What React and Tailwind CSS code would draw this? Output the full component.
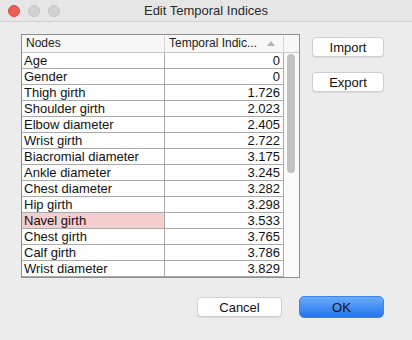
import React from 'react';

const ROWS = [
  ['Age', '0'],
  ['Gender', '0'],
  ['Thigh girth', '1.726'],
  ['Shoulder girth', '2.023'],
  ['Elbow diameter', '2.405'],
  ['Wrist girth', '2.722'],
  ['Biacromial diameter', '3.175'],
  ['Ankle diameter', '3.245'],
  ['Chest diameter', '3.282'],
  ['Hip girth', '3.298'],
  ['Navel girth', '3.533'],
  ['Chest girth', '3.765'],
  ['Calf girth', '3.786'],
  ['Wrist diameter', '3.829'],
];

function Button({ children, primary }) {
  return (
    <button
      className={
        primary
          ? 'w-[85px] h-[22px] rounded-[5px] border border-[#3d84ea] bg-gradient-to-b from-[#6aaaf8] to-[#2075ef] text-[13px] text-[#111] leading-none'
          : 'w-[85px] h-[20px] rounded-[4px] border border-[#cfcfcf] bg-white shadow-[0_1px_0_rgba(0,0,0,0.08)] text-[13px] text-[#111] leading-none'
      }
    >
      {children}
    </button>
  );
}

export default function App() {
  return (
    <div className="w-[412px] h-[340px] bg-[#ececec] font-['Liberation_Sans',Arial,sans-serif] text-[#111] overflow-hidden flex flex-col">
      {/* Title bar */}
      <div className="h-[22px] grid grid-cols-[1fr_auto_1fr] items-center bg-[#e6e6e6] border-b border-[#d0d0d0]">
        <div className="flex items-center gap-[8px] pl-[8px]">
          <span className="w-[12px] h-[12px] rounded-full bg-[#ee5c54] border border-[#d94a42]" />
          <span className="w-[12px] h-[12px] rounded-full bg-[#d1d1d1] border border-[#c4c4c4]" />
          <span className="w-[12px] h-[12px] rounded-full bg-[#d1d1d1] border border-[#c4c4c4]" />
        </div>
        <div className="text-[13px] text-[#2a2a2a]">Edit Temporal Indices</div>
        <div />
      </div>

      <div className="flex pl-[21px] pt-[12px]">
        {/* Table */}
        <div className="w-[279px] h-[244px] border border-[#8e8e8e] flex bg-white">
          <div className="w-[262px] flex flex-col">
            <div className="h-[18px] flex border-b border-[#c9c9c9] bg-[#f7f7f7] text-[12px] text-[#222]">
              <div className="w-[143px] border-r border-[#d6d6d6] pl-[4px] leading-[17px]">Nodes</div>
              <div className="w-[119px] border-r border-[#d6d6d6] pl-[4px] pr-[8px] flex items-center justify-between leading-[17px]">
                <span>Temporal Indic...</span>
                <span className="w-0 h-0 border-l-[4px] border-r-[4px] border-b-[5px] border-l-transparent border-r-transparent border-b-[#b4b4b4]" />
              </div>
            </div>
            {ROWS.map(([name, val]) => (
              <div key={name} className="h-[16px] flex border-b border-[#a9a9a9] text-[13px] leading-[15px]">
                <div
                  className={
                    'w-[143px] border-r border-[#a9a9a9] pl-[2px] whitespace-nowrap ' +
                    (name === 'Navel girth' ? 'bg-[#f6cdcd]' : '')
                  }
                >
                  {name}
                </div>
                <div className="w-[119px] border-r border-[#a9a9a9] pr-[3px] text-right">{val}</div>
              </div>
            ))}
          </div>
          {/* Scrollbar */}
          <div className="w-[15px] flex flex-col">
            <div className="h-[18px] bg-[#f7f7f7] border-b border-[#c9c9c9]" />
            <div className="flex-1 bg-[#fafafa] pl-[3px] pt-[1px]">
              <div className="w-[8px] h-[119px] rounded-full bg-[#c2c2c2]" />
            </div>
          </div>
        </div>

        {/* Side buttons */}
        <div className="ml-[12px] pt-[3px] flex flex-col gap-[15px]">
          <button className="w-[72px] h-[20px] rounded-[4px] border border-[#cfcfcf] bg-white shadow-[0_1px_0_rgba(0,0,0,0.08)] text-[13px] leading-none">
            Import
          </button>
          <button className="w-[72px] h-[20px] rounded-[4px] border border-[#cfcfcf] bg-white shadow-[0_1px_0_rgba(0,0,0,0.08)] text-[13px] leading-none">
            Export
          </button>
        </div>
      </div>

      {/* Bottom buttons */}
      <div className="mt-[18px] pr-[28px] flex justify-end items-center gap-[17px]">
        <Button>Cancel</Button>
        <Button primary>OK</Button>
      </div>
    </div>
  );
}
